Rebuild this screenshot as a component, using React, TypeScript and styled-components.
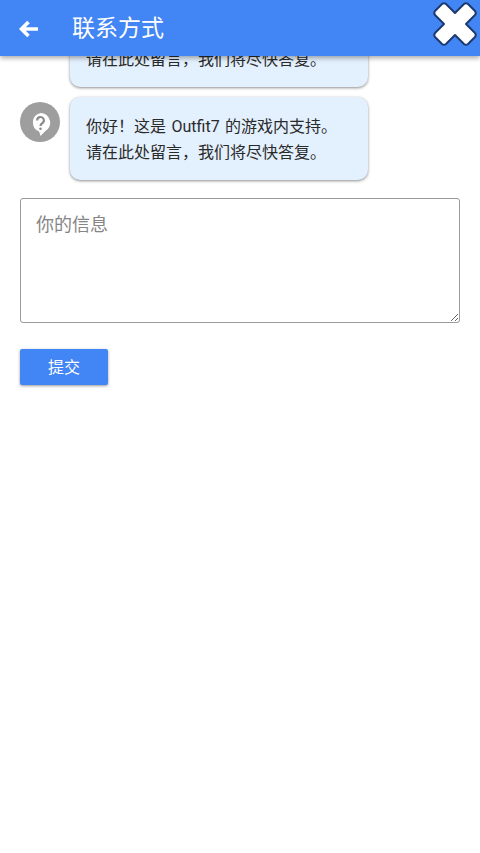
import React from 'react'
import styled, { createGlobalStyle } from 'styled-components'

const GlobalStyle = createGlobalStyle`
  html, body {
    margin: 0;
    padding: 0;
    background: #fff;
  }
  * {
    box-sizing: border-box;
  }
`

const Page = styled.div`
  position: relative;
  width: 480px;
  height: 853px;
  overflow: hidden;
  background: #fff;
  font-family: Roboto, "Noto Sans CJK SC", sans-serif;
`

const Header = styled.header`
  position: absolute;
  top: 0;
  left: 0;
  z-index: 2;
  width: 100%;
  height: 56px;
  display: flex;
  align-items: center;
  background: #4285f4;
  box-shadow: 0 2px 5px rgba(0, 0, 0, 0.35);
`

const BackButton = styled.button`
  width: 72px;
  height: 56px;
  padding: 2px 0 0 18px;
  display: flex;
  align-items: center;
  border: 0;
  background: none;
`

const Title = styled.h1`
  margin: 0;
  padding-bottom: 4px;
  color: #fff;
  font-size: 23px;
  font-weight: 400;
`

const CloseButton = styled.button`
  position: absolute;
  top: 1px;
  right: 2px;
  z-index: 3;
  width: 46px;
  height: 46px;
  padding: 0;
  border: 0;
  background: none;
`

const Content = styled.main`
  padding: 4px 20px 0;
  display: flex;
  flex-direction: column;
  align-items: flex-start;
`

const Thread = styled.div`
  display: flex;
  flex-direction: column;
  gap: 10px;
  margin-bottom: 18px;
`

const Message = styled.div`
  display: flex;
  align-items: flex-start;
  gap: 10px;
`

const Avatar = styled.div<{ $hidden?: boolean }>`
  width: 40px;
  height: 40px;
  margin-top: 5px;
  padding-top: 4px;
  display: flex;
  align-items: center;
  justify-content: center;
  border-radius: 50%;
  background: ${p => (p.$hidden ? 'transparent' : '#9e9e9e')};
`

const Bubble = styled.div`
  width: 298px;
  height: 83px;
  padding: 17px 16px 0;
  border-radius: 10px;
  background: #e3f0fd;
  box-shadow: 0 1px 3px rgba(0, 0, 0, 0.45);
  color: #2a2a2a;
  font-size: 16px;
  line-height: 26px;
  word-spacing: 1.5px;
`

const MessageInput = styled.textarea`
  display: block;
  width: 440px;
  height: 125px;
  margin-bottom: 26px;
  padding: 13px 15px;
  border: 1px solid #9a9a9a;
  border-radius: 3px;
  outline: none;
  background: #fff;
  color: #212121;
  font-family: inherit;
  font-size: 18px;
  line-height: 26px;

  &::placeholder {
    color: #858585;
    opacity: 1;
  }
`

const SubmitButton = styled.button`
  width: 88px;
  height: 36px;
  padding: 0 0 2px;
  border: 0;
  border-radius: 2px;
  background: #4285f4;
  box-shadow: 0 1px 3px rgba(0, 0, 0, 0.4);
  color: #fff;
  font-family: inherit;
  font-size: 16px;
`

const BackIcon = () => (
  <svg width="22" height="20" viewBox="0 0 22 20" fill="none">
    <path
      d="M20 10H4M10.5 3L3.5 10l7 7"
      stroke="#fff"
      strokeWidth="3.6"
      strokeLinejoin="miter"
    />
  </svg>
)

const CloseIcon = () => (
  <svg width="46" height="46" viewBox="0 0 46 46">
    <path
      d="M10 3Q12 1.500 14 3L23 12 32 3Q34 1.500 36 3L43 10Q44.500 12 43 14L34 23 43 32Q44.500 34 43 36L36 43Q34 44.500 32 43L23 34 14 43Q12 44.500 10 43L3 36Q1.500 34 3 32L12 23 3 14Q1.500 12 3 10Z"
      fill="#fff"
      stroke="#1d3a70"
      strokeWidth="2"
      strokeLinejoin="round"
    />
  </svg>
)

const HelpIcon = () => (
  <svg width="23" height="27" viewBox="0 0 26 30">
    <path
      d="M13 2a11 11 0 0 1 5 20.800L13 28l-1.500-5A11 11 0 0 1 13 2Z"
      fill="#fff"
    />
    <path
      d="M9.200 10.500a3.800 3.800 0 1 1 5.800 3.100c-1.300 .8-2 1.500-2 3"
      fill="none"
      stroke="#8a8a8a"
      strokeWidth="2.400"
    />
    <circle cx="13" cy="19.800" r="1.500" fill="#8a8a8a" />
  </svg>
)

const App = () => (
  <Page>
    <GlobalStyle />
    <Header>
      <BackButton aria-label="返回">
        <BackIcon />
      </BackButton>
      <Title>联系方式</Title>
    </Header>
    <CloseButton aria-label="关闭">
      <CloseIcon />
    </CloseButton>
    <Content>
      <Thread>
        <Message>
          <Avatar $hidden />
          <Bubble>
            你好！这是 Outfit7 的游戏内支持。
            <br />
            请在此处留言，我们将尽快答复。
          </Bubble>
        </Message>
        <Message>
          <Avatar>
            <HelpIcon />
          </Avatar>
          <Bubble>
            你好！这是 Outfit7 的游戏内支持。
            <br />
            请在此处留言，我们将尽快答复。
          </Bubble>
        </Message>
      </Thread>
      <MessageInput placeholder="你的信息" />
      <SubmitButton>提交</SubmitButton>
    </Content>
  </Page>
)

export default App
